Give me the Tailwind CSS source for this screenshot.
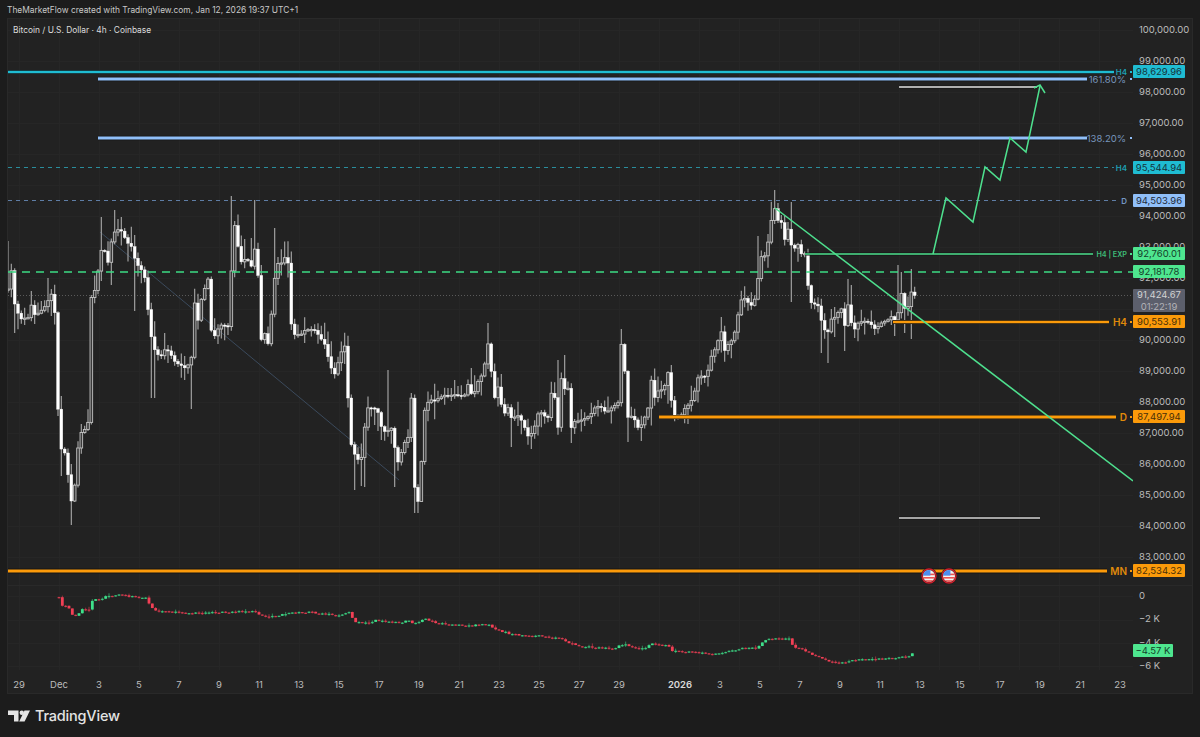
<!DOCTYPE html>
<html lang="en">
<head>
    <meta charset="UTF-8">
    <meta name="viewport" content="width=device-width, initial-scale=1.0">
    <script src="https://cdn.jsdelivr.net/npm/@tailwindcss/browser@4"></script>
</head>
<body class="w-[1200px] h-[737px] overflow-hidden flex flex-col bg-[#1c1c1c] font-['Inter',sans-serif]">
    <!-- snapshot caption -->
    <div class="h-[18px] pl-[7px] text-[8.4px] leading-[21px] text-[#c8c8c8]">TheMarketFlow created with TradingView.com, Jan 12, 2026 19:37 UTC+1</div>

    <!-- chart panel -->
    <div class="ml-[7px] w-[1186px] h-[676px] border border-[#292929] bg-[#222222] flex flex-col">
        <div class="h-[566px] flex">
            <div class="relative w-[1125px] overflow-hidden">
                <svg id="main" class="block" width="1125" height="566" viewBox="8 19 1125 566">
                    <g id="grid" stroke="#262626" stroke-width="1"></g>
                    <line x1="100" y1="232" x2="399" y2="480" stroke="#3b4a5c" stroke-width="1"/>
                    <line x1="8" y1="295.5" x2="1133" y2="295.5" stroke="#5a5a5a" stroke-width="1" stroke-dasharray="1 2"/>
                    <line x1="8" y1="167.5" x2="1114" y2="167.5" stroke="#2a8d9c" stroke-width="1" stroke-dasharray="4 4"/>
                    <line x1="8" y1="200.5" x2="1120" y2="200.5" stroke="#5f7ea6" stroke-width="1" stroke-dasharray="4 4"/>
                    <g id="candles"></g>
                    <line x1="8" y1="272" x2="1133" y2="272" stroke="#3ddc84" stroke-width="1.5" stroke-dasharray="8 6"/>

                    <line x1="8" y1="72" x2="1114" y2="72" stroke="#141414" stroke-width="4"/>
                    <line x1="8" y1="72" x2="1114" y2="72" stroke="#1fbcd2" stroke-width="2.6"/>
                    <line x1="98" y1="79" x2="1087" y2="79" stroke="#141414" stroke-width="4.6"/>
                    <line x1="98" y1="79" x2="1087" y2="79" stroke="#90bff9" stroke-width="3"/>
                    <line x1="98" y1="138" x2="1087" y2="138" stroke="#141414" stroke-width="4.6"/>
                    <line x1="98" y1="138" x2="1087" y2="138" stroke="#90bff9" stroke-width="3"/>
                    <line x1="899" y1="87" x2="1037" y2="87" stroke="#141414" stroke-width="3"/>
                    <line x1="899" y1="87" x2="1037" y2="87" stroke="#e4e4e4" stroke-width="1.5"/>
                    <line x1="899" y1="518" x2="1040" y2="518" stroke="#141414" stroke-width="3"/>
                    <line x1="899" y1="518" x2="1040" y2="518" stroke="#d6d6d6" stroke-width="1.5"/>

                    <line x1="805" y1="254" x2="1093" y2="254" stroke="#141414" stroke-width="3"/>
                    <line x1="805" y1="254" x2="1093" y2="254" stroke="#4ee08e" stroke-width="1.6"/>
                    <line x1="893" y1="322" x2="1109" y2="322" stroke="#141414" stroke-width="4"/>
                    <line x1="893" y1="322" x2="1109" y2="322" stroke="#fb9a0a" stroke-width="2.6"/>
                    <line x1="659" y1="417" x2="1116" y2="417" stroke="#141414" stroke-width="4.2"/>
                    <line x1="659" y1="417" x2="1116" y2="417" stroke="#fb9a0a" stroke-width="2.8"/>
                    <line x1="8" y1="571" x2="1107" y2="571" stroke="#141414" stroke-width="4.8"/>
                    <line x1="8" y1="571" x2="1107" y2="571" stroke="#fb9a0a" stroke-width="3"/>

                    <line x1="775" y1="208" x2="1133" y2="481" stroke="#4ee08e" stroke-width="1.5"/>
                    <polyline points="933,254 946,198 973,222 985,167 1000,180 1010,138 1026,152 1040,86" fill="none" stroke="#4ee08e" stroke-width="1.5"/>
                    <polyline points="1034,88 1040,85 1045,93" fill="none" stroke="#4ee08e" stroke-width="1.5"/>

                    <!-- line labels -->
                    <g font-size="8px" font-weight="600" text-anchor="end">
                        <text x="1127" y="75" fill="#1d9fb2">H4</text>
                        <text x="1127" y="171" fill="#1d9fb2">H4</text>
                        <text x="1127" y="204" fill="#7396c4">D</text>
                        <text x="1127" y="257" fill="#3fbd78" font-size="7.2px">H4 | EXP</text>
                    </g>
                    <g font-size="9.5px" text-anchor="end" fill="#7896bd">
                        <text x="1126" y="83">161.80%</text>
                        <text x="1126" y="142">138.20%</text>
                    </g>
                    <g font-size="10px" font-weight="600" text-anchor="end" fill="#e08a0a">
                        <text x="1127" y="326">H4</text>
                        <text x="1127" y="421">D</text>
                        <text x="1127" y="575">MN</text>
                    </g>
                    <rect x="1130" y="71" width="2" height="2" fill="#1fbcd2"/>
                    <rect x="1130" y="78" width="2" height="2" fill="#90bff9"/>
                    <rect x="1130" y="137" width="2" height="2" fill="#90bff9"/>
                    <rect x="1130" y="253" width="2" height="2" fill="#4ee08e"/>
                    <rect x="1130" y="321" width="2" height="2" fill="#fb9a0a"/>
                    <rect x="1130" y="416" width="2" height="2" fill="#fb9a0a"/>
                    <rect x="1130" y="570" width="2" height="2" fill="#fb9a0a"/>

                    <!-- economic event flags -->
                    <defs>
                        <clipPath id="flag"><circle cx="0" cy="0" r="6"/></clipPath>
                        <g id="us">
                            <circle r="8" fill="#141414"/>
                            <circle r="7" fill="none" stroke="#d3202e" stroke-width="1.4"/>
                            <g clip-path="url(#flag)">
                                <rect x="-6" y="-6" width="12" height="12" fill="#f4f4f4"/>
                                <rect x="-6" y="-2.4" width="12" height="1.6" fill="#ef5350"/>
                                <rect x="-6" y="1" width="12" height="1.6" fill="#ef5350"/>
                                <rect x="-6" y="4.2" width="12" height="1.8" fill="#ef5350"/>
                                <rect x="-6" y="-6" width="7.4" height="5.6" fill="#4c8df0"/>
                            </g>
                        </g>
                    </defs>
                    <use href="#us" x="929" y="576"/>
                    <use href="#us" x="949" y="576"/>
                </svg>
                <div class="absolute left-[5px] top-[5px] text-[8.4px] leading-[13px] text-[#dcdcdc]">Bitcoin / U.S. Dollar · 4h · Coinbase</div>
            </div>
            <!-- price scale -->
            <div class="relative w-[59px] overflow-hidden text-[9.5px] text-[#bcbcbc]">
                <div class="-mt-[5px] pl-[6px]">
                    <div class="h-[31px] leading-[31px]">100,000.00</div>
                    <div class="h-[31px] leading-[31px]">99,000.00</div>
                    <div class="h-[31px] leading-[31px]">98,000.00</div>
                    <div class="h-[31px] leading-[31px]">97,000.00</div>
                    <div class="h-[31px] leading-[31px]">96,000.00</div>
                    <div class="h-[31px] leading-[31px]">95,000.00</div>
                    <div class="h-[31px] leading-[31px]">94,000.00</div>
                    <div class="h-[31px] leading-[31px]">93,000.00</div>
                    <div class="h-[31px] leading-[31px]">92,000.00</div>
                    <div class="h-[31px]"></div>
                    <div class="h-[31px] leading-[31px]">90,000.00</div>
                    <div class="h-[31px] leading-[31px]">89,000.00</div>
                    <div class="h-[31px] leading-[31px]">88,000.00</div>
                    <div class="h-[31px] leading-[31px]">87,000.00</div>
                    <div class="h-[31px] leading-[31px]">86,000.00</div>
                    <div class="h-[31px] leading-[31px]">85,000.00</div>
                    <div class="h-[31px] leading-[31px]">84,000.00</div>
                    <div class="h-[31px] leading-[31px]">83,000.00</div>
                </div>
                <div class="absolute left-0 top-[46px] w-[52px] h-[13px] leading-[13px] text-center rounded-[1px] bg-[#1fbcd2] text-[#15333a]">98,629.96</div>
                <div class="absolute left-0 top-[142px] w-[52px] h-[13px] leading-[13px] text-center rounded-[1px] bg-[#1fbcd2] text-[#15333a]">95,544.94</div>
                <div class="absolute left-0 top-[175px] w-[52px] h-[13px] leading-[13px] text-center rounded-[1px] bg-[#90bff9] text-[#1f2b3a]">94,503.96</div>
                <div class="absolute left-0 top-[228px] w-[52px] h-[13px] leading-[13px] text-center rounded-[1px] bg-[#4ee68f] text-[#14402a]">92,760.01</div>
                <div class="absolute left-0 top-[246px] w-[52px] h-[13px] leading-[13px] text-center rounded-[1px] bg-[#4ee68f] text-[#14402a]">92,181.78</div>
                <div class="absolute left-0 top-[270px] w-[52px] h-[23px] leading-[11.5px] text-center rounded-[1px] bg-[#5c5f6c] text-[#d2d2d2]">91,424.67<br><span class="text-[#b2b2b8]">01:22:19</span></div>
                <div class="absolute left-0 top-[296px] w-[52px] h-[13px] leading-[13px] text-center rounded-[1px] bg-[#fb9a0a] text-[#4a3008]">90,553.91</div>
                <div class="absolute left-0 top-[391px] w-[52px] h-[13px] leading-[13px] text-center rounded-[1px] bg-[#fb9a0a] text-[#4a3008]">87,497.94</div>
                <div class="absolute left-0 top-[545px] w-[52px] h-[13px] leading-[13px] text-center rounded-[1px] bg-[#fb9a0a] text-[#4a3008]">82,534.32</div>
            </div>
        </div>

        <!-- lower pane -->
        <div class="h-[85px] flex border-t border-[#292929]">
            <div class="w-[1125px] overflow-hidden">
                <svg id="sub" class="block" width="1125" height="84" viewBox="8 586 1125 84">
                    <g id="subGrid" stroke="#262626" stroke-width="1"></g>
                    <g id="subCandles"></g>
                </svg>
            </div>
            <div class="relative w-[59px] overflow-hidden text-[9.5px] text-[#bcbcbc]">
                <div class="-mt-[2px] pl-[6px]">
                    <div class="h-[23.3px] leading-[23.3px]">0</div>
                    <div class="h-[23.3px] leading-[23.3px]">−2 K</div>
                    <div class="h-[23.3px] leading-[23.3px]">−4 K</div>
                    <div class="h-[23.3px] leading-[23.3px]">−6 K</div>
                </div>
                <div class="absolute left-0 top-[58px] w-[40px] h-[13px] leading-[13px] text-center rounded-[1px] bg-[#4ee68f] text-[#14402a]">−4.57 K</div>
            </div>
        </div>

        <!-- time scale -->
        <div class="h-[23px] flex -ml-[9px] text-[9.5px] leading-[29px] text-[#bcbcbc] text-center">
            <div class="w-[40px]">29</div>
            <div class="w-[40px]">Dec</div>
            <div class="w-[40px]">3</div>
            <div class="w-[40px]">5</div>
            <div class="w-[40px]">7</div>
            <div class="w-[40px]">9</div>
            <div class="w-[40px]">11</div>
            <div class="w-[40px]">13</div>
            <div class="w-[40px]">15</div>
            <div class="w-[40px]">17</div>
            <div class="w-[40px]">19</div>
            <div class="w-[40px]">21</div>
            <div class="w-[40px]">23</div>
            <div class="w-[40px]">25</div>
            <div class="w-[40px]">27</div>
            <div class="w-[40px]">29</div>
            <div class="w-[40px] ml-[21px] font-semibold text-[#d8d8d8]">2026</div>
            <div class="w-[40px]">3</div>
            <div class="w-[40px]">5</div>
            <div class="w-[40px]">7</div>
            <div class="w-[40px]">9</div>
            <div class="w-[40px]">11</div>
            <div class="w-[40px]">13</div>
            <div class="w-[40px]">15</div>
            <div class="w-[40px]">17</div>
            <div class="w-[40px]">19</div>
            <div class="w-[40px]">21</div>
            <div class="w-[40px]">23</div>
        </div>
    </div>

    <!-- logo -->
    <div class="flex-1 flex items-center pl-[8px] gap-[4px] pt-[1px] text-[#e4e4e4]">
        <svg width="23" height="12" viewBox="0 0 23 12" fill="currentColor">
            <path d="M0 0.5h10.5v11H6V5H0z"/>
            <circle cx="13.8" cy="2.7" r="2.2"/>
            <path d="M16.5 0.5H22L16.6 11.5H11.2z"/>
        </svg>
        <span class="text-[14.5px] font-medium tracking-[-0.2px]">TradingView</span>
    </div>

    <script>
        // closes of the 4h candles, in page pixels [x, y]
        const anchors = [[8,290],[11,267],[14,303],[17,310],[20,318],[23,320],[28,317],[31,305],[35,315],[40,312],[45,307],[50,295],[53,295],[56,327],[59,450],[63,447],[67,460],[70,505],[74,493],[77,455],[80,433],[84,430],[88,422],[90,313],[93,279],[96,300],[99,258],[103,245],[109,265],[112,235],[118,230],[122,232],[126,240],[132,247],[135,260],[140,270],[144,270],[146,296],[150,325],[153,350],[156,350],[160,358],[165,350],[170,352],[175,362],[180,365],[187,368],[192,355],[194,295],[197,327],[200,305],[204,290],[208,280],[212,340],[216,333],[220,325],[225,325],[229,327],[232,255],[235,221],[239,256],[243,265],[247,253],[250,273],[255,247],[258,276],[260,343],[265,332],[268,343],[273,300],[276,260],[280,265],[285,258],[289,265],[292,340],[296,332],[300,335],[305,330],[315,330],[325,345],[330,365],[335,375],[340,355],[345,345],[350,432],[353,460],[356,450],[360,468],[365,425],[369,403],[373,410],[377,405],[380,425],[385,432],[390,428],[393,427],[396,465],[400,460],[403,445],[408,438],[411,387],[414,480],[417,512],[420,480],[423,438],[425,405],[430,400],[436,400],[440,397],[450,395],[455,395],[460,397],[465,395],[468,384],[473,400],[476,385],[480,380],[484,367],[488,343],[490,348],[493,402],[499,385],[503,417],[508,408],[512,420],[516,415],[520,418],[524,425],[528,437],[531,435],[534,430],[537,415],[540,412],[548,418],[550,392],[555,398],[558,427],[561,378],[565,390],[569,388],[571,428],[575,420],[580,420],[585,418],[590,415],[595,408],[600,405],[605,412],[610,410],[615,405],[618,402],[620,338],[624,358],[627,418],[632,415],[635,420],[638,427],[642,425],[644,418],[648,408],[650,372],[654,398],[658,390],[664,388],[668,373],[672,407],[674,418],[677,418],[681,415],[685,408],[690,405],[695,390],[697,378],[703,376],[707,375],[710,358],[715,350],[718,340],[722,330],[725,353],[730,340],[733,340],[736,325],[740,305],[743,295],[747,302],[752,305],[757,293],[760,252],[763,263],[768,243],[772,217],[775,208],[778,220],[781,222],[785,240],[790,222],[793,276],[796,225],[799,253],[803,253],[806,253],[807,277],[810,300],[813,305],[818,305],[820,317],[823,325],[827,337],[830,320],[834,318],[838,312],[841,308],[845,328],[848,305],[853,332],[857,323],[862,322],[867,322],[870,322],[874,328],[877,328],[880,322],[885,322],[888,320],[892,317],[895,320],[897,322],[898,312],[900,290],[904,302],[906,322],[910,291],[914,295]];

        // spikes that random wicks would miss: [x, high, low]
        const spikes = [[9,241,0],[14,0,333],[49,278,0],[63,0,476],[70,0,531],[73,0,525],[102,217,0],[112,0,285],[116,210,0],[120,217,0],[133,0,311],[150,0,398],[153,0,398],[190,0,409],[232,196,0],[246,239,0],[253,238,0],[256,200,0],[276,228,0],[353,0,490],[360,0,486],[363,0,487],[389,370,0],[393,0,487],[414,0,513],[417,0,513],[420,0,493],[489,323,0],[510,0,447],[530,0,449],[558,360,0],[563,355,0],[570,0,443],[621,329,0],[629,0,442],[640,0,441],[758,236,0],[776,190,0],[790,202,0],[793,0,302],[823,0,353],[829,0,363],[846,0,351],[849,279,0],[853,285,0],[856,0,338],[896,0,336],[899,265,0],[903,272,0],[906,0,333],[910,0,339],[913,269,0]];

        // lower pane line, same x scale
        const subAnchors = [[59,597],[60,605],[65,606],[70,610],[73,616],[78,617],[80,610],[90,609],[91,605],[93,598],[100,600],[105,596],[120,595],[135,597],[147,598],[150,606],[157,611],[190,613],[230,612],[255,611],[258,614],[270,617],[290,613],[310,612],[340,616],[350,612],[354,622],[370,623],[375,620],[400,623],[409,620],[413,623],[420,621],[427,619],[433,622],[443,624],[467,626],[487,624],[493,628],[510,634],[533,637],[537,635],[557,638],[570,643],[577,646],[613,649],[620,645],[627,645],[633,648],[647,648],[650,643],[667,645],[673,651],[700,652],[707,654],[733,651],[740,648],[758,648],[760,643],[773,638],[790,639],[793,647],[807,651],[813,655],[830,662],[847,662],[850,660],[897,658],[910,656],[914,651]];

        const NS = 'http://www.w3.org/2000/svg';
        function el(parent, name, attrs) {
            const node = document.createElementNS(NS, name);
            for (const k in attrs) node.setAttribute(k, attrs[k]);
            parent.appendChild(node);
            return node;
        }

        let seed = 4217;
        function rnd() {
            seed = (seed * 16807) % 2147483647;
            return seed / 2147483647;
        }

        function at(list, x) {
            if (x <= list[0][0]) return list[0][1];
            for (let i = 1; i < list.length; i++) {
                if (x <= list[i][0]) {
                    const a = list[i - 1], b = list[i];
                    return a[1] + (b[1] - a[1]) * (x - a[0]) / (b[0] - a[0]);
                }
            }
            return list[list.length - 1][1];
        }

        // grid
        const grid = document.getElementById('grid');
        const subGrid = document.getElementById('subGrid');
        for (let x = 19; x < 1133; x += 40) {
            el(grid, 'line', { x1: x + .5, y1: 19, x2: x + .5, y2: 585 });
            el(subGrid, 'line', { x1: x + .5, y1: 586, x2: x + .5, y2: 670 });
        }
        for (let y = 30; y < 585; y += 31) el(grid, 'line', { x1: 8, y1: y + .5, x2: 1133, y2: y + .5 });
        for (const y of [596, 620, 643, 666]) el(subGrid, 'line', { x1: 8, y1: y + .5, x2: 1133, y2: y + .5 });

        // main candles: down = solid white, up = hollow
        const candles = document.getElementById('candles');
        const step = 10 / 3;
        let prev = anchors[0][1];
        for (let x = 8; x <= 915; x += step) {
            const close = at(anchors, x) + (rnd() - .5) * 2;
            let hi = Math.min(prev, close) - 1 - rnd() * rnd() * 20;
            let lo = Math.max(prev, close) + 1 + rnd() * rnd() * 20;
            for (const s of spikes) {
                if (Math.abs(s[0] - x) <= step / 2) {
                    if (s[1]) hi = s[1];
                    if (s[2]) lo = s[2];
                }
            }
            el(candles, 'line', { x1: x, y1: hi, x2: x, y2: lo, stroke: '#a0a0a0', 'stroke-width': 1.2 });
            const top = Math.min(prev, close), h = Math.max(Math.abs(close - prev), 1.2);
            if (close > prev) {
                el(candles, 'rect', { x: x - 1.4, y: top, width: 2.8, height: h, fill: '#ffffff', stroke: '#ffffff', 'stroke-width': .4 });
            } else {
                el(candles, 'rect', { x: x - 1.3, y: top, width: 2.6, height: h, fill: '#3a3a3a', stroke: '#c4c4c4', 'stroke-width': .9 });
            }
            prev = close;
        }

        // lower pane candles: red down, green up
        const subCandles = document.getElementById('subCandles');
        prev = subAnchors[0][1];
        for (let x = 59; x <= 915; x += step) {
            const close = at(subAnchors, x) + (rnd() - .5) * 1.6;
            const colour = close > prev ? '#f23f55' : '#3ee08a';
            const top = Math.min(prev, close), h = Math.max(Math.abs(close - prev), 1.3);
            const w = rnd() * rnd() * 3;
            el(subCandles, 'line', { x1: x, y1: top - w, x2: x, y2: top + h + w / 2, stroke: colour, 'stroke-width': .8, opacity: .7 });
            el(subCandles, 'rect', { x: x - 1.4, y: top, width: 2.8, height: h, fill: colour, opacity: h > 1.5 ? 1 : .75 });
            prev = close;
        }
    </script>
</body>
</html>
